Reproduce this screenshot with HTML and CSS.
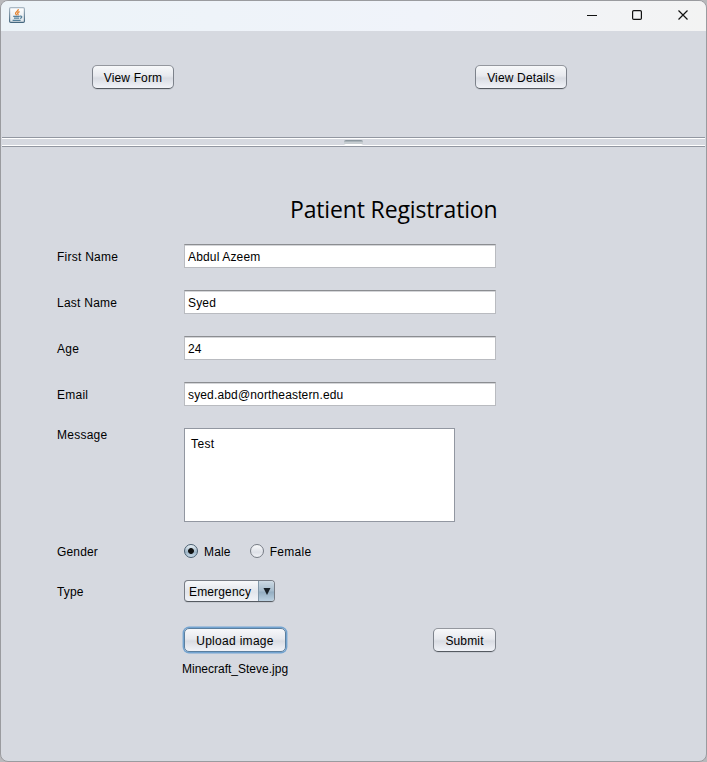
FILE: index.html
```html
<!DOCTYPE html>
<html lang="en">
<head>
<meta charset="utf-8">
<title>Patient Registration</title>
<link rel="stylesheet" href="styles.css">
</head>
<body>
<div class="window">
  <header class="titlebar">
    <svg class="app-icon" width="16" height="16" viewBox="0 0 16 16" fill="none">
      <defs>
        <linearGradient id="tile" x1="0" y1="0" x2="0" y2="1"><stop offset="0" stop-color="#fff"/><stop offset="1" stop-color="#dfe5ea"/></linearGradient>
        <linearGradient id="edge" x1="0" y1="0" x2="0" y2="1"><stop offset="0" stop-color="#a9b8c4"/><stop offset="1" stop-color="#45677f"/></linearGradient>
      </defs>
      <rect x=".6" y=".6" width="14.8" height="14.8" rx="1.2" fill="url(#tile)" stroke="url(#edge)" stroke-width="1.2"/>
      <path d="M9.3 2.2C9.6 4.2 6 4.7 6.6 6.6c.2.7.9 1.1 1 1.8M10.6 4.6C8.9 5.2 8.2 6 8.9 6.9c.4.5.2 1-.2 1.4" stroke="#e5822e" stroke-width="1.3"/>
      <path d="M4.2 9.4h6.6M5 11.2h5.2M11 9.2c2.4-.6 2.4 1.7 0 2.1M3.6 13.3h8" stroke="#55809b" stroke-width="1.2"/>
    </svg>
    <svg class="controls" width="104" height="12" viewBox="0 0 104 12" fill="none" stroke="#111" stroke-width="1.2">
      <path d="M0 6.5h10" stroke-width="1"/>
      <rect x="45.6" y="1.6" width="8.8" height="8.8" rx="1.2"/>
      <path d="M91.5 1.5l9 9M100.5 1.5l-9 9"/>
    </svg>
  </header>
  <nav class="toolbar">
    <button class="button view-form">View Form</button>
    <button class="button view-details">View Details</button>
  </nav>
  <div class="divider"><span class="grip"></span></div>
  <main class="content">
    <h1 class="heading">Patient Registration</h1>
    <form class="form">
      <label class="row"><span class="label">First Name</span><input class="field" value="Abdul Azeem"></label>
      <label class="row"><span class="label">Last Name</span><input class="field" value="Syed"></label>
      <label class="row"><span class="label">Age</span><input class="field" value="24"></label>
      <label class="row"><span class="label">Email</span><input class="field" value="syed.abd@northeastern.edu"></label>
      <label class="row message-row">Message<textarea class="message">Test</textarea></label>
      <div class="row gender-row">Gender
        <div class="radios">
          <span class="option"><i class="radio selected"></i>Male</span>
          <span class="option"><i class="radio"></i>Female</span>
        </div>
      </div>
      <div class="row type-row">Type
        <div class="combo"><span class="combo-value">Emergency</span><span class="combo-arrow"><svg width="8" height="7" viewBox="0 0 8 7"><path d="M.5 0h7L4 7z" fill="#182027"/></svg></span></div>
      </div>
      <div class="actions">
        <button type="button" class="button upload">Upload image</button>
        <button type="button" class="button submit">Submit</button>
      </div>
      <div class="filename">Minecraft_Steve.jpg</div>
    </form>
  </main>
</div>
</body>
</html>
```
FILE: styles.css
```css
* { box-sizing: border-box; }
body {
  margin: 0;
  background: #b9b9bc;
  font: 12px/16px "Liberation Sans", Arial, sans-serif;
  color: #000;
}
.window {
  height: 762px;
  border: 1px solid #9a9b9f;
  border-radius: 8px;
  background: #d6d9e0;
  overflow: hidden;
}
.titlebar {
  height: 30px;
  padding: 0 15px 2px 8px;
  display: flex;
  align-items: center;
  justify-content: space-between;
  background: linear-gradient(90deg, #ecf3f8, #f0f3fa 60%, #f3f3f3);
}
.toolbar {
  height: 106px;
  padding: 34px 139px 0 91px;
  display: flex;
  justify-content: space-between;
  align-items: flex-start;
}
.button {
  height: 24px;
  padding: 2px 0 0;
  border: 1px solid #7d828b;
  border-top-color: #94979e;
  border-bottom-color: #555a61;
  border-radius: 5px;
  background: linear-gradient(#f7f8fa, #e7e9ee 45%, #d9dce3 55%, #f1f3f8);
  box-shadow: 0 1px 0 #c6cad1;
  font: inherit;
  letter-spacing: .15px;
  color: #000;
}
.view-form { width: 82px; }
.view-details { width: 92px; }
.divider {
  height: 10px;
  margin: 0 1px;
  display: flex;
  justify-content: center;
  align-items: center;
  border-top: 1px solid #9297a1;
  border-bottom: 1px solid #9297a1;
  box-shadow: inset 0 1px #fff, inset 0 -1px #fff;
}
.grip {
  width: 19px;
  height: 5px;
  border-radius: 2px;
  background: linear-gradient(#8d989f 0 1px, #aab4ba 1px 2px, #c7cdd1 2px 4px, #fff 4px);
}
.content { padding: 46px 56px 0; }
.heading {
  margin: 0 0 19px 233px;
  font: 400 23px/32px "Open Sans", "Noto Sans", sans-serif;
  letter-spacing: -.15px;
  white-space: nowrap;
}
.form { letter-spacing: .15px; }
.row {
  display: grid;
  grid-template-columns: 127px 1fr;
  align-items: center;
  height: 24px;
  margin-bottom: 22px;
}
.label { padding-top: 2px; letter-spacing: .25px; }
.field {
  width: 312px;
  height: 24px;
  padding: 2px 3px 0;
  border: 1px solid #b9bbc0;
  border-top-color: #8b8d91;
  border-radius: 0;
  background: #fff;
  box-shadow: inset 0 1px #d4d5d8;
  font: inherit;
  letter-spacing: inherit;
  color: inherit;
  outline: none;
}
.message-row {
  height: 93px;
  align-items: start;
  margin-top: -1px;
  letter-spacing: .25px;
  margin-bottom: 20px;
}
.message {
  width: 271px;
  height: 94px;
  margin-top: 1px;
  padding: 7px 6px;
  border: 1px solid #9297a1;
  border-radius: 0;
  background: #fff;
  resize: none;
  font: inherit;
  letter-spacing: .4px;
  color: inherit;
  outline: none;
}
.gender-row { margin-bottom: 16px; }
.radios { display: flex; gap: 19px; }
.option { display: flex; align-items: center; gap: 6px; }
.option:last-child { letter-spacing: .3px; }
.radio {
  width: 14px;
  height: 14px;
  margin-bottom: 2px;
  border: 1px solid #777c85;
  border-radius: 50%;
  background: linear-gradient(#fafbfc, #dde0e7 60%, #f1f3f7);
}
.radio.selected {
  border-color: #485e70;
  background: radial-gradient(circle, #111 0 2.5px, transparent 3.3px), linear-gradient(#e9f0f5, #9eb5c7 60%, #c8dae8);
}
.type-row { margin-bottom: 24px; }
.combo {
  width: 91px;
  height: 22px;
  margin-bottom: 2px;
  display: flex;
  border: 1px solid #777c85;
  border-bottom-color: #555a61;
  border-radius: 4px;
  background: linear-gradient(#f7f8fa, #e2e5eb 55%, #f1f3f8);
  box-shadow: 0 1px 0 #c6cad1;
  overflow: hidden;
}
.combo-value { flex: 1; padding: 3px 0 0 4px; }
.combo-arrow {
  width: 16px;
  display: grid;
  place-items: center;
  border-left: 1px solid #8297a9;
  background: linear-gradient(#cddae4, #a5bbcc 50%, #93adc1 55%, #bcd1e1);
}
.actions {
  display: flex;
  justify-content: space-between;
  width: 312px;
  margin-left: 127px;
}
.upload {
  width: 102px;
  border-color: #5b7f9f;
  box-shadow: 0 0 0 1.4px #73a4d1;
  letter-spacing: .3px;
}
.submit { width: 63px; }
.filename { margin: 9px 0 0 125px; letter-spacing: 0; }
```
